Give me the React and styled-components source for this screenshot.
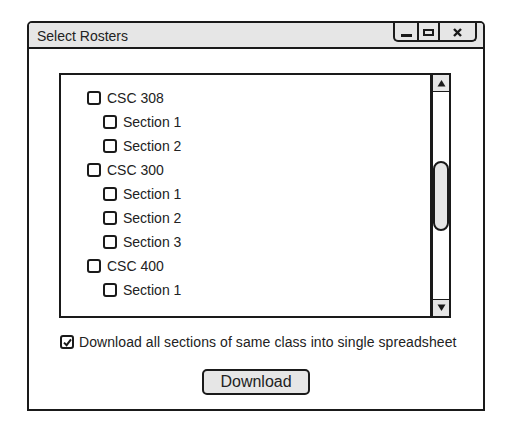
import React from 'react'
import styled, { createGlobalStyle } from 'styled-components'

const GlobalStyle = createGlobalStyle`
  body {
    margin: 0;
    background: #ffffff;
    font-family: "Liberation Sans", Arial, sans-serif;
    color: #1a1a1a;
  }
`

const rosters = [
  { id: 'csc308', name: 'CSC 308', sections: ['Section 1', 'Section 2'] },
  { id: 'csc300', name: 'CSC 300', sections: ['Section 1', 'Section 2', 'Section 3'] },
  { id: 'csc400', name: 'CSC 400', sections: ['Section 1'] },
]

function Check({ checked }) {
  return (
    <StCheck>
      {checked && (
        <svg width="9" height="9" viewBox="0 0 9 9">
          <path d="M1 4.6 L3.6 7.2 L8 1.4" fill="none" stroke="#1a1a1a" strokeWidth="2" />
        </svg>
      )}
    </StCheck>
  )
}

function App() {
  return (
    <>
      <GlobalStyle />
      <StWindow>
        <StTitleBar>
          <StTitle>Select Rosters</StTitle>
          <StControls>
            <StControl $w={24}>
              <StMin />
            </StControl>
            <StControl $w={21}>
              <StMax />
            </StControl>
            <StControl $w={35} $last>
              <svg width="9" height="9" viewBox="0 0 9 9">
                <path d="M1 1 L8 8 M8 1 L1 8" stroke="#1a1a1a" strokeWidth="2.4" />
              </svg>
            </StControl>
          </StControls>
        </StTitleBar>

        <StBody>
          <StListBox>
            <StList>
              {rosters.map((course) => (
                <React.Fragment key={course.id}>
                  <StRow>
                    <Check />
                    <span>{course.name}</span>
                  </StRow>
                  {course.sections.map((sec) => (
                    <StRow key={course.id + sec} $indent>
                      <Check />
                      <span>{sec}</span>
                    </StRow>
                  ))}
                </React.Fragment>
              ))}
            </StList>
            <StScrollbar>
              <StArrow>
                <svg width="9" height="8" viewBox="0 0 9 8">
                  <path d="M4.5 1 L8.5 7.5 L0.5 7.5 Z" fill="#1a1a1a" />
                </svg>
              </StArrow>
              <StTrack>
                <StThumb />
              </StTrack>
              <StArrow $down>
                <svg width="9" height="8" viewBox="0 0 9 8">
                  <path d="M0.5 0.5 L8.5 0.5 L4.5 7 Z" fill="#1a1a1a" />
                </svg>
              </StArrow>
            </StScrollbar>
          </StListBox>

          <StOption>
            <Check checked />
            <span>Download all sections of same class into single spreadsheet</span>
          </StOption>

          <StButton>Download</StButton>
        </StBody>
      </StWindow>
    </>
  )
}

const StWindow = styled.div`
  margin: 21px 0 0 27px;
  width: 458px;
  height: 390px;
  box-sizing: border-box;
  border: 2px solid #1a1a1a;
  border-radius: 5px 5px 0 0;
  display: flex;
  flex-direction: column;
`

const StTitleBar = styled.div`
  height: 24px;
  flex: none;
  background: #e6e6e6;
  border-bottom: 2px solid #1a1a1a;
  border-radius: 3px 3px 0 0;
  display: flex;
  align-items: flex-start;
  padding: 0 6px 0 8px;
`

const StTitle = styled.div`
  font-size: 14px;
  line-height: 24px;
  padding-top: 1px;
  color: #222;
`

const StControls = styled.div`
  margin-left: auto;
  display: flex;
  height: 19px;
  box-sizing: border-box;
  border: 2px solid #1a1a1a;
  border-top: none;
  border-radius: 0 0 5px 5px;
`

const StControl = styled.div`
  width: ${(p) => p.$w}px;
  display: flex;
  align-items: center;
  justify-content: center;
  box-sizing: border-box;
  border-right: ${(p) => (p.$last ? 'none' : '2px solid #1a1a1a')};
  padding-top: 1px;
`

const StMin = styled.div`
  width: 11px;
  height: 3px;
  background: #1a1a1a;
  margin-top: 6px;
`

const StMax = styled.div`
  width: 11px;
  height: 7px;
  box-sizing: border-box;
  border: 2px solid #1a1a1a;
`

const StBody = styled.div`
  flex: 1;
  display: flex;
  flex-direction: column;
  padding: 24px 0 0 30px;
`

const StListBox = styled.div`
  width: 392px;
  height: 245px;
  box-sizing: border-box;
  border: 2px solid #1a1a1a;
  display: flex;
`

const StList = styled.div`
  flex: 1;
  padding: 11px 0 0 26px;
`

const StRow = styled.div`
  height: 24px;
  display: flex;
  align-items: center;
  gap: 6px;
  font-size: 14px;
  color: #222;
  padding-left: ${(p) => (p.$indent ? '16px' : '0')};
`

const StCheck = styled.div`
  width: 14px;
  height: 14px;
  box-sizing: border-box;
  border: 2px solid #1a1a1a;
  border-radius: 3px;
  background: #ffffff;
  display: flex;
  align-items: center;
  justify-content: center;
  flex: none;
`

const StScrollbar = styled.div`
  width: 16px;
  border-left: 3px solid #1a1a1a;
  display: flex;
  flex-direction: column;
`

const StArrow = styled.div`
  height: 16px;
  background: #e6e6e6;
  display: flex;
  align-items: center;
  justify-content: center;
  border-bottom: ${(p) => (p.$down ? 'none' : '1px solid #1a1a1a')};
  border-top: ${(p) => (p.$down ? '1px solid #1a1a1a' : 'none')};
`

const StTrack = styled.div`
  flex: 1;
  background: #ffffff;
`

const StThumb = styled.div`
  margin-top: 69px;
  height: 70px;
  box-sizing: border-box;
  border: 2px solid #1a1a1a;
  border-radius: 9px;
  background: #e6e6e6;
`

const StOption = styled.div`
  margin-top: 16px;
  display: flex;
  align-items: center;
  gap: 5px;
  font-size: 14px;
  letter-spacing: 0.08px;
  color: #222;
  margin-left: 1px;
`

const StButton = styled.button`
  align-self: center;
  margin: 19px 0 0 -30px;
  width: 108px;
  height: 26px;
  background: #e6e6e6;
  border: 2px solid #1a1a1a;
  border-radius: 5px;
  font-family: "Liberation Sans", Arial, sans-serif;
  font-size: 16px;
  color: #222;
  padding: 0;
`

export default App
